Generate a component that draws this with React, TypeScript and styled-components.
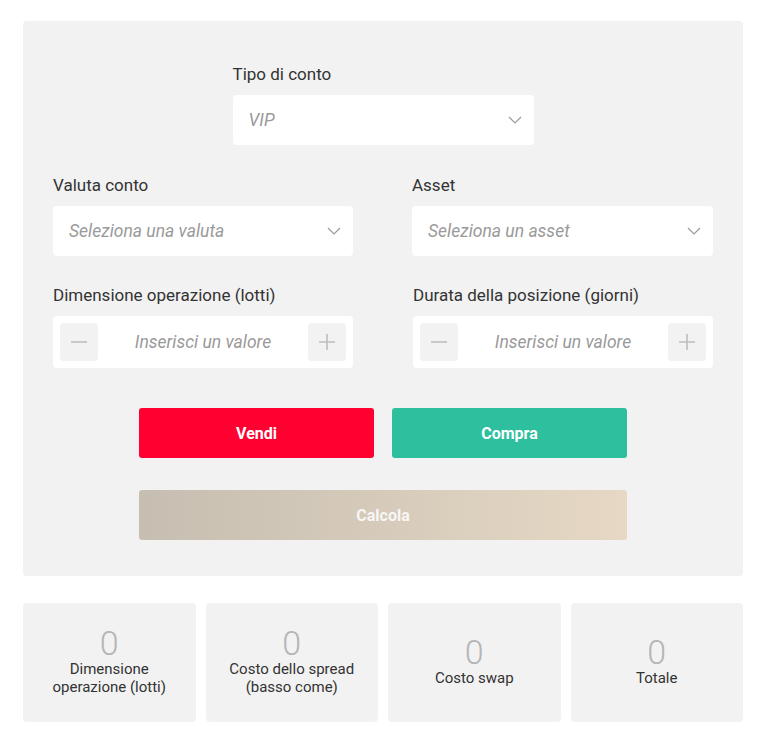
import React from "react";
import styled, { createGlobalStyle } from "styled-components";

const Global = createGlobalStyle`
  html, body { margin: 0; padding: 0; background: #ffffff; }
  body { font-family: Roboto, "Liberation Sans", sans-serif; }
  * { box-sizing: border-box; }
`;

const Page = styled.div`
  width: 720px;
  margin: 21px 0 0 23px;
  display: flex;
  flex-direction: column;
  gap: 27px;
`;

const Panel = styled.div`
  background: #f2f2f2;
  border-radius: 4px;
  padding: 43px 30px 36px;
  display: flex;
  flex-direction: column;
`;

const Row = styled.div<{ $mt?: number }>`
  display: flex;
  justify-content: space-between;
  margin-top: ${(p) => p.$mt ?? 0}px;
`;

const Centered = styled.div`
  display: flex;
  justify-content: center;
`;

const Field = styled.div<{ $w?: number }>`
  width: ${(p) => p.$w ?? 300}px;
  display: flex;
  flex-direction: column;
`;

const Label = styled.div`
  font-size: 17px;
  line-height: 20px;
  color: #333333;
  margin-bottom: 11px;
`;

const SelectBox = styled.div`
  height: 50px;
  background: #ffffff;
  border-radius: 4px;
  display: flex;
  align-items: center;
  justify-content: space-between;
  padding: 0 12px 0 16px;
`;

const Placeholder = styled.span`
  font-size: 17.5px;
  font-style: italic;
  color: #9a9a9a;
`;

const Stepper = styled.div`
  height: 52px;
  background: #ffffff;
  border-radius: 4px;
  display: flex;
  align-items: center;
  justify-content: space-between;
  padding: 7px;
`;

const StepBtn = styled.div`
  width: 38px;
  height: 38px;
  background: #f2f2f2;
  border-radius: 4px;
  display: flex;
  align-items: center;
  justify-content: center;
`;

const Actions = styled.div`
  width: 488px;
  margin: 40px auto 0;
  display: flex;
  flex-direction: column;
  gap: 32px;
`;

const ButtonRow = styled.div`
  display: flex;
  justify-content: space-between;
`;

const Button = styled.div<{ $bg: string; $w?: string }>`
  width: ${(p) => p.$w ?? "235px"};
  height: 50px;
  border-radius: 3px;
  background: ${(p) => p.$bg};
  color: #ffffff;
  font-weight: 700;
  font-size: 16px;
  display: flex;
  align-items: center;
  justify-content: center;
`;

const CalcButton = styled(Button)`
  color: rgba(255, 255, 255, 0.85);
`;

const Cards = styled.div`
  display: grid;
  grid-template-columns: repeat(4, 1fr);
  gap: 10px;
`;

const Card = styled.div`
  height: 119px;
  background: #f2f2f2;
  border-radius: 4px;
  display: flex;
  flex-direction: column;
  align-items: center;
  justify-content: center;
  text-align: center;
`;

const Value = styled.div`
  font-size: 34px;
  font-weight: 300;
  line-height: 34px;
  color: #b5b5b5;
`;

const CardLabel = styled.div`
  font-size: 15px;
  line-height: 18px;
  color: #333333;
  margin-bottom: 3px;
`;

const Chevron = () => (
  <svg width="14" height="8" viewBox="0 0 14 8" fill="none">
    <path d="M1 1l6 6 6-6" stroke="#9a9a9a" strokeWidth="1.2" />
  </svg>
);

const Minus = () => (
  <svg width="16" height="16" viewBox="0 0 16 16">
    <path d="M0 8h16" stroke="#bdbdbd" strokeWidth="1.6" />
  </svg>
);

const Plus = () => (
  <svg width="16" height="16" viewBox="0 0 16 16">
    <path d="M0 8h16M8 0v16" stroke="#bdbdbd" strokeWidth="1.6" />
  </svg>
);

const Select = ({ label, placeholder, w }: { label: string; placeholder: string; w?: number }) => (
  <Field $w={w}>
    <Label>{label}</Label>
    <SelectBox>
      <Placeholder>{placeholder}</Placeholder>
      <Chevron />
    </SelectBox>
  </Field>
);

const StepField = ({ label }: { label: string }) => (
  <Field>
    <Label>{label}</Label>
    <Stepper>
      <StepBtn>
        <Minus />
      </StepBtn>
      <Placeholder>Inserisci un valore</Placeholder>
      <StepBtn>
        <Plus />
      </StepBtn>
    </Stepper>
  </Field>
);

const results: { lines: string[] }[] = [
  { lines: ["Dimensione", "operazione (lotti)"] },
  { lines: ["Costo dello spread", "(basso come)"] },
  { lines: ["Costo swap"] },
  { lines: ["Totale"] },
];

export default function App() {
  return (
    <>
      <Global />
      <Page>
        <Panel>
          <Centered>
            <Select label="Tipo di conto" placeholder="VIP" w={301} />
          </Centered>
          <Row $mt={30}>
            <Select label="Valuta conto" placeholder="Seleziona una valuta" />
            <Select label="Asset" placeholder="Seleziona un asset" w={301} />
          </Row>
          <Row $mt={29}>
            <StepField label="Dimensione operazione (lotti)" />
            <StepField label="Durata della posizione (giorni)" />
          </Row>
          <Actions>
            <ButtonRow>
              <Button $bg="#ff0030">Vendi</Button>
              <Button $bg="#2dbf9e">Compra</Button>
            </ButtonRow>
            <CalcButton $bg="linear-gradient(90deg, #c6beb1 0%, #e6d8c4 100%)" $w="100%">
              Calcola
            </CalcButton>
          </Actions>
        </Panel>
        <Cards>
          {results.map((r, i) => (
            <Card key={i}>
              <Value>0</Value>
              <CardLabel>
                {r.lines.map((l, j) => (
                  <div key={j}>{l}</div>
                ))}
              </CardLabel>
            </Card>
          ))}
        </Cards>
      </Page>
    </>
  );
}
